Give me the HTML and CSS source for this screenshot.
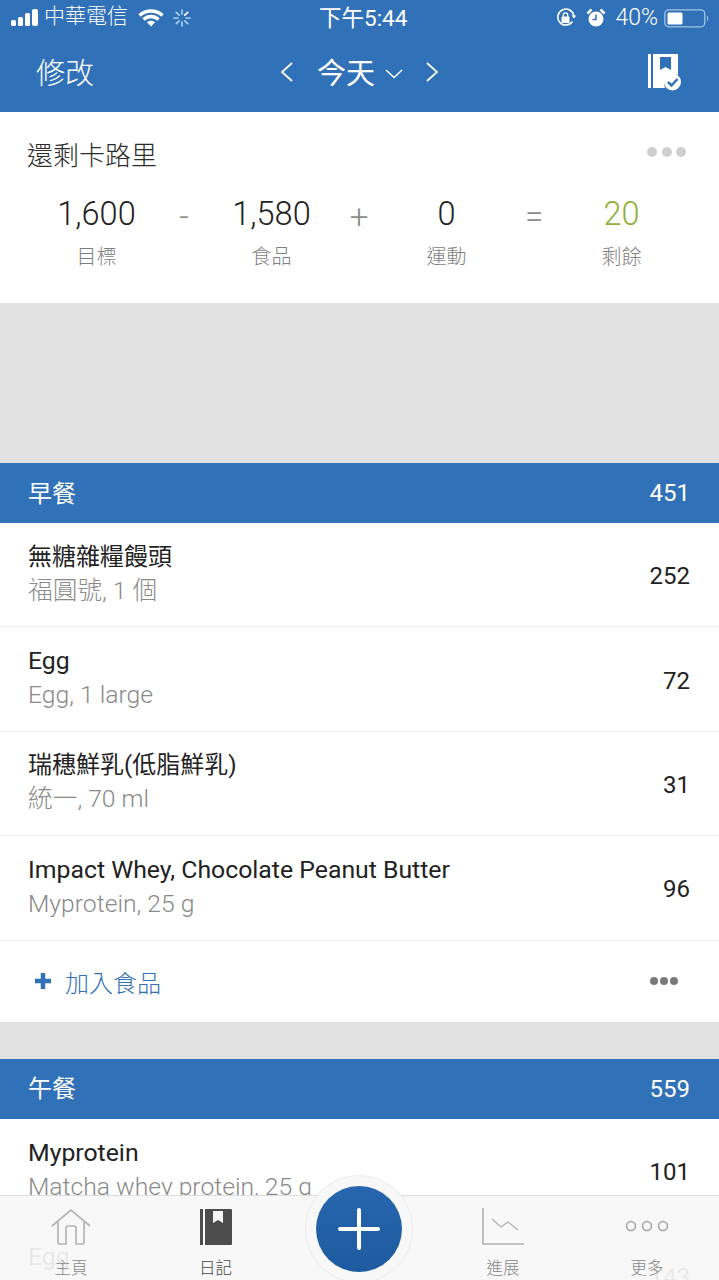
FILE: index.html
```html
<!DOCTYPE html>
<html lang="zh-Hant">
<head>
<meta charset="utf-8">
<title>日記</title>
<link rel="stylesheet" href="styles.css">
</head>
<body>
<div class="app">
  <header class="top">
    <div class="status">
      <div class="status-left">
        <svg class="signal" width="30" height="18" viewBox="0 0 30 18"><rect x="1" y="11" width="5" height="6" rx="1.500"/><rect x="8" y="8" width="5" height="9" rx="1.500"/><rect x="15" y="4" width="5" height="13" rx="1.500"/><rect x="22" y="0" width="6" height="17" rx="2"/></svg>
        <span class="carrier">中華電信</span>
        <svg class="wifi" width="26" height="18" viewBox="0 0 26 18"><path d="M1.500 6.500C8 .5 18 .5 24.500 6.500M5.500 10.500c4.500-4 10.500-4 15 0" fill="none" stroke="#fff" stroke-width="3.400"/><path d="M9 13.300c2.300-2 5.700-2 8 0L13 17.500z" fill="#fff"/></svg>
        <svg class="spinner" width="18" height="18" viewBox="0 0 18 18"><g stroke="#a9cdec" stroke-width="1.700" stroke-linecap="round"><path d="M9 1v4M9 13v4M1 9h4M13 9h4M3.300 3.300l2.900 2.900M11.800 11.800l2.900 2.900M3.300 14.700l2.900-2.900"/><path d="M11.800 6.200l2.900-2.900" stroke="#fff"/></g></svg>
      </div>
      <div class="clock">下午5:44</div>
      <div class="status-right">
        <svg width="20" height="20" viewBox="0 0 20 20"><path d="M16.500 13.500A8 8 0 1 1 17.800 8" fill="none" stroke="#fff" stroke-width="1.600"/><path d="M15.500 7.500h5l-2.500 3z" fill="#fff"/><rect x="5.500" y="8.500" width="8" height="6.500" rx="1" fill="#fff"/><path d="M7.300 9V7a2.200 2.200 0 0 1 4.400 0v2" fill="none" stroke="#fff" stroke-width="1.300"/></svg>
        <svg class="alarm" width="20" height="20" viewBox="0 0 20 20"><circle cx="10" cy="11" r="7.500" fill="#fff"/><path d="M10 6.500V11.500H6.500" fill="none" stroke="#3171b8" stroke-width="1.500"/><path d="M1.500 5.500 5.500 1.500M18.500 5.500 14.500 1.500" stroke="#fff" stroke-width="2.500"/></svg>
        <span class="pct">40%</span>
        <svg width="46" height="20" viewBox="0 0 46 20"><rect x=".8" y="1.800" width="40" height="17" rx="4" fill="none" stroke="#a5c5e4" stroke-width="1.300"/><rect x="3.500" y="4.500" width="15" height="12" rx="1.500" fill="#fff"/><path d="M43 7.500c1.500.5 1.500 5 0 5.500z" fill="#a5c5e4"/></svg>
      </div>
    </div>
    <nav class="navbar">
      <span class="edit">修改</span>
      <div class="date">
        <svg width="14" height="22" viewBox="0 0 14 22"><path d="M12 2 2 11l10 9" fill="none" stroke="#fff" stroke-width="1.700"/></svg>
        <span class="today">今天</span>
        <svg class="caret" width="18" height="10" viewBox="0 0 18 10"><path d="M1 1l8 7.500L17 1" fill="none" stroke="#fff" stroke-width="1.500"/></svg>
        <svg class="next" width="14" height="22" viewBox="0 0 14 22"><path d="M2 2l10 9-10 9" fill="none" stroke="#fff" stroke-width="1.700"/></svg>
      </div>
      <svg class="book-check" width="36" height="40" viewBox="0 0 36 40"><rect x="1" y="2" width="3" height="34" fill="#fff"/><path d="M6 2h25v21a10 10 0 0 0-13 13H6z" fill="#fff"/><path d="M13 5h11v13l-5.500-3-5.500 3z" fill="#3171b8"/><circle cx="25.500" cy="30" r="8.500" fill="#fff"/><path d="M21 30l3.500 3.500 6-6.500" fill="none" stroke="#3171b8" stroke-width="2.500"/></svg>
    </nav>
  </header>

  <section class="summary">
    <div class="summary-head">
      <h2>還剩卡路里</h2>
      <div class="dots dots-light"><i></i><i></i><i></i></div>
    </div>
    <div class="equation">
      <div class="term"><b>1,600</b><span>目標</span></div>
      <div class="op">-</div>
      <div class="term"><b>1,580</b><span>食品</span></div>
      <div class="op">+</div>
      <div class="term"><b>0</b><span>運動</span></div>
      <div class="op">=</div>
      <div class="term"><b class="left">20</b><span>剩餘</span></div>
    </div>
  </section>

  <div class="ad"></div>

  <section class="meal">
    <div class="meal-head"><span class="meal-name">早餐</span><span>451</span></div>
    <div class="food"><div class="food-text"><div class="name name-cjk">無糖雜糧饅頭</div><div class="desc">福圓號, 1 個</div></div><div class="kcal">252</div></div>
    <div class="food"><div class="food-text"><div class="name">Egg</div><div class="desc">Egg, 1 large</div></div><div class="kcal">72</div></div>
    <div class="food"><div class="food-text"><div class="name name-cjk">瑞穗鮮乳(低脂鮮乳)</div><div class="desc">統一, 70 ml</div></div><div class="kcal">31</div></div>
    <div class="food"><div class="food-text"><div class="name">Impact Whey, Chocolate Peanut Butter</div><div class="desc">Myprotein, 25 g</div></div><div class="kcal">96</div></div>
    <div class="add-row">
      <div class="add"><svg width="18" height="18" viewBox="0 0 18 18"><path d="M9 1v16M1 9h16" stroke="#3171b8" stroke-width="4.500"/></svg><span>加入食品</span></div>
      <div class="dots dots-dark"><i></i><i></i><i></i></div>
    </div>
  </section>

  <div class="gap"></div>

  <section class="meal">
    <div class="meal-head"><span class="meal-name">午餐</span><span>559</span></div>
    <div class="food"><div class="food-text"><div class="name">Myprotein</div><div class="desc">Matcha whey protein, 25 g</div></div><div class="kcal">101</div></div>
    <div class="food"><div class="food-text"><div class="name">Egg</div><div class="desc">Egg, 1 large</div></div><div class="kcal">143</div></div>
  </section>

  <footer class="tabbar">
    <div class="tab">
      <svg width="42" height="38" viewBox="0 0 42 38"><path d="M2 18 21 2l19 16M8 14v20a2 2 0 0 0 2 2h6V20a2 2 0 0 1 2-2h6a2 2 0 0 1 2 2v16h6a2 2 0 0 0 2-2V14" fill="none" stroke="#b4b4b4" stroke-width="1.700"/></svg>
      <span>主頁</span>
    </div>
    <div class="tab tab-active">
      <svg width="42" height="38" viewBox="0 0 42 38"><rect x="5" y="1" width="3" height="36" fill="#4d4d4d"/><path d="M10 1h26a1 1 0 0 1 1 1v34a1 1 0 0 1-1 1H10z" fill="#4d4d4d"/><path d="M18 3h10v12l-5-3-5 3z" fill="#f7f7f7"/></svg>
      <span>日記</span>
    </div>
    <div class="tab tab-spacer"></div>
    <div class="tab">
      <svg width="42" height="38" viewBox="0 0 42 38"><path d="M1 0v36h41" fill="none" stroke="#b0b0b0" stroke-width="1.600"/><path d="M10 11l9 8 7-5 10 8" fill="none" stroke="#b0b0b0" stroke-width="1.300"/></svg>
      <span>進展</span>
    </div>
    <div class="tab">
      <svg width="46" height="38" viewBox="0 0 46 38"><g fill="none" stroke="#a4a4a4" stroke-width="1.600"><circle cx="7" cy="18" r="4.500"/><circle cx="23" cy="18" r="4.500"/><circle cx="39" cy="18" r="4.500"/></g></svg>
      <span>更多</span>
    </div>
  </footer>
  <div class="fab">
    <svg width="42" height="42" viewBox="0 0 42 42"><path d="M21 2v38M2 21h38" stroke="#fff" stroke-width="4" stroke-linecap="round"/></svg>
  </div>
</div>
</body>
</html>
```

FILE: styles.css
```css
* { box-sizing: border-box; }
html, body { margin: 0; padding: 0; }
body {
  width: 719px;
  height: 1280px;
  overflow: hidden;
  background: #e2e2e2;
  font-family: Roboto, "Noto Sans CJK TC", sans-serif;
  color: #222;
}
.app { position: relative; width: 719px; height: 1280px; overflow: hidden; }

.top { background: #3171b8; height: 112px; color: #fff; }
.status { position: relative; display: flex; justify-content: space-between; align-items: center; height: 36px; padding: 0 10px; }
.status-left, .status-right { display: flex; align-items: center; }
.signal { fill: #fff; margin-right: 4px; }
.carrier { font-size: 21px; line-height: 26px; font-weight: 300; margin: 0 10px 4px 0; }
.wifi { margin-right: 9px; }
.clock { position: absolute; left: 319px; top: 5px; font-size: 22.500px; line-height: 26px; }
.status-right { gap: 9px; margin-right: -1px; }
.pct { font-size: 23px; line-height: 28px; font-weight: 300; margin-right: -3px; }
.alarm { margin-left: 1px; }

.navbar { position: relative; display: flex; justify-content: space-between; align-items: center; height: 76px; padding: 0 36px 0 36px; }
.edit { font-size: 29px; line-height: 72px; font-weight: 300; }
.date { position: absolute; left: 280px; top: 14px; display: flex; align-items: center; height: 44px; }
.today { font-size: 29px; line-height: 44px; font-weight: 400; margin: 3px 0 0 23px; }
.caret { margin-left: 10px; margin-top: 4px; }
.next { margin-left: 22px; }
.book-check { margin-top: -4px; }

.summary { background: #fff; height: 191px; padding: 26px 33px 0 27px; }
.summary-head { display: flex; justify-content: space-between; align-items: flex-start; }
.summary-head h2 { margin: 0; font-size: 26px; line-height: 36px; font-weight: 300; color: #2b2b2b; }
.dots { display: flex; }
.dots i { display: block; border-radius: 50%; }
.dots-light { gap: 4.500px; margin-top: 9px; }
.dots-light i { width: 10px; height: 10px; background: #cfcfcf; }
.dots-dark { gap: 2px; }
.dots-dark i { width: 8px; height: 8px; background: #7a7a7a; }

.equation { display: grid; grid-template-columns: 175px 0 175px 0 175px 0 175px; margin: 20px 0 0 -18px; }
.term { display: flex; flex-direction: column; align-items: center; }
.term b { font-size: 32.500px; line-height: 40px; font-weight: 300; color: #222; }
.term b.left { color: #8fb03a; }
.term span { font-size: 20px; line-height: 32px; font-weight: 300; color: #7f7f7f; margin-top: 7px; }
.op { display: flex; justify-content: center; font-size: 33px; line-height: 46px; font-weight: 300; color: #8c8c8c; width: 0; }

.ad { height: 160px; background: #e2e2e2; }

.meal-head { display: flex; justify-content: space-between; align-items: center; height: 60px; padding: 0 29px 0 28px; background: #3171b8; color: #fff; font-size: 24px; font-weight: 400; }
.meal-name { margin-bottom: 4px; }
.food { display: flex; justify-content: space-between; align-items: center; height: 104.400px; padding: 0 29px 2px 28px; background: #fff; border-bottom: 1px solid #f0f0f0; }
.name { font-size: 24.800px; line-height: 34px; color: #222; font-weight: 400; }
.name-cjk { font-size: 24px; }
.desc { font-size: 24.700px; line-height: 34px; color: #8a8a8a; font-weight: 300; }
.kcal { font-size: 24px; line-height: 34px; color: #222; padding-top: 5px; }

.add-row { display: flex; justify-content: space-between; align-items: center; height: 82.400px; padding: 0 41px 0 34px; background: #fff; border-bottom: 1px solid #dcdcdc; }
.add { display: flex; align-items: center; gap: 13px; color: #3171b8; font-size: 24px; font-weight: 300; }
.gap { height: 36px; background: #e2e2e2; }

.tabbar { position: absolute; left: 0; right: 0; top: 1195px; height: 85px; display: grid; grid-template-columns: 142px 147px 142px 144px 144px; background: rgba(247, 247, 247, 0.93); border-top: 1px solid #dddddd; }
.tab { display: flex; flex-direction: column; align-items: center; padding-top: 12px; color: #888; font-size: 16.500px; line-height: 18px; font-weight: 300; }
.tab svg { display: block; margin-bottom: 14px; }
.tab-active { color: #444; }
.fab { position: absolute; left: 306px; top: 1176px; width: 106px; height: 106px; padding: 10px; display: flex; align-items: center; justify-content: center; border-radius: 50%; background: linear-gradient(#2766ae, #1e5b9f) content-box, #f8f8f8; background-clip: content-box, border-box; box-shadow: 0 0 0 1px #eeeeee; }
```
